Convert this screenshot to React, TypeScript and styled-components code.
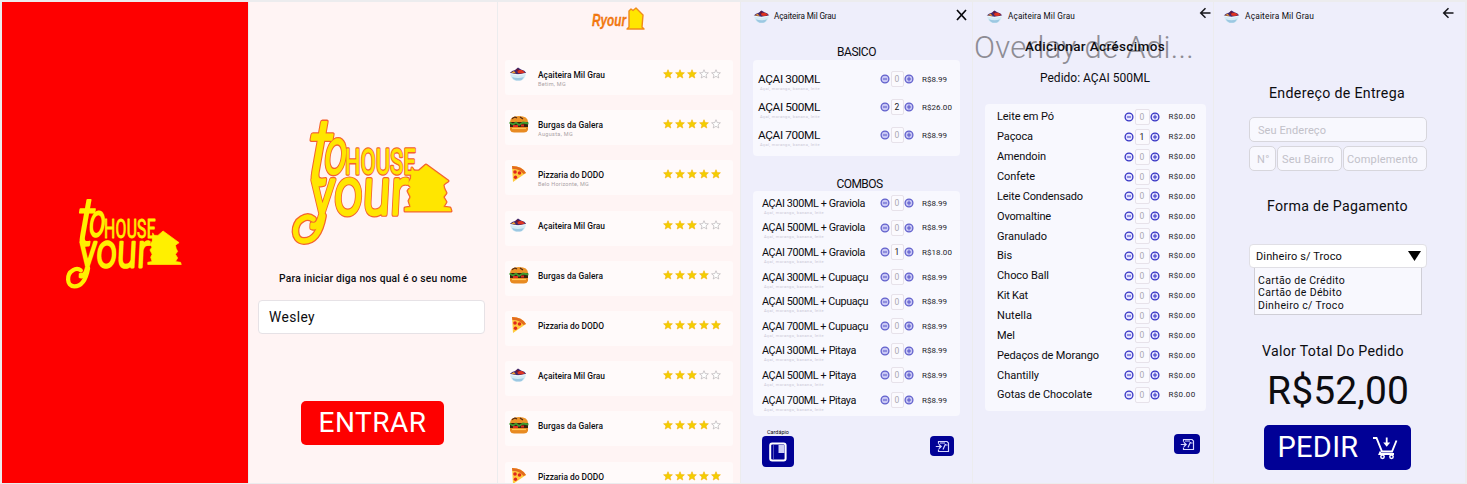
import React, { useLayoutEffect, useRef, useState } from "react";
import styled, { createGlobalStyle } from "styled-components";

const GlobalStyle = createGlobalStyle`
  * { box-sizing: border-box; }
  body { margin: 0; background: #ececee; font-family: Roboto, "Liberation Sans", sans-serif; color: #0c0c10; }
`;

const Board = styled.main`
  display: grid;
  grid-template-columns: 246px 248px 242px 231px 240px 251px;
  column-gap: 1px;
  width: 1467px;
  height: 484px;
  padding: 2px 0 1px 2px;
  overflow: hidden;
`;

const Screen = styled.section<{ $bg: string }>`
  display: flex;
  flex-direction: column;
  min-width: 0;
  height: 481px;
  overflow: hidden;
  background: ${(p) => p.$bg};
`;

const FitSpan = styled.span<{ $size: number; $weight?: number; $color?: string }>`
  display: inline-block;
  white-space: pre;
  flex: none;
  align-self: flex-start;
  width: max-content;
  font-size: ${(p) => p.$size}px;
  font-weight: ${(p) => p.$weight ?? 400};
  color: ${(p) => p.$color ?? "inherit"};
`;

type FitProps = { text: string; size: number; width?: number; weight?: number; color?: string };

/* Tracks the label in or out so that it takes the given width. */
function Fit({ text, size, width, weight, color }: FitProps) {
  const ref = useRef<HTMLSpanElement>(null);
  const [spacing, setSpacing] = useState(0);
  useLayoutEffect(() => {
    const el = ref.current;
    if (el && width) {
      el.style.letterSpacing = "0px";
      const next = (width - el.getBoundingClientRect().width) / text.length;
      el.style.letterSpacing = `${next}px`;
      setSpacing(next);
    }
  }, [text, width]);
  return (
    <FitSpan ref={ref} $size={size} $weight={weight} $color={color} style={{ letterSpacing: `${spacing}px` }}>
      {text}
    </FitSpan>
  );
}

const Line = styled.div<{ $h: number; $mt?: number; $ml?: number; $center?: boolean }>`
  display: flex;
  flex: none;
  align-items: center;
  justify-content: ${(p) => (p.$center ? "center" : "flex-start")};
  height: ${(p) => p.$h}px;
  line-height: ${(p) => p.$h}px;
  margin-top: ${(p) => p.$mt ?? 0}px;
  margin-left: ${(p) => p.$ml ?? 0}px;
`;

/* ---------- brand ---------- */

const LogoSvg = styled.svg<{ $mt: number; $ml: number }>`
  display: block;
  flex: none;
  overflow: visible;
  margin: ${(p) => p.$mt}px 0 0 ${(p) => p.$ml}px;
`;

const housePath =
  "M118 47 L120 50 L125 50 L132 44 L154 60 L151 62 L149 64 L150 68 L152 72 L149 76 L152 81 L149 86 L156 87 L157 90 L111 90 L111 87 L117 86 L115 80 L117 76 L114 70 L117 66 L114 63 L117 58 Z";

function LogoShapes({ color, extra }: { color: string; extra: number }) {
  return (
    <g fill={color} stroke={color} strokeLinejoin="round" strokeLinecap="round">
      <g fontFamily="Roboto, 'Liberation Sans', sans-serif" fontWeight="300">
        <text transform="translate(9 63) skewX(-10) scale(1.25 1.55)" fontSize="60" strokeWidth={1.7 + extra / 1.4}>t</text>
        <text transform="translate(29 51.5) skewX(-7) scale(.64 1.03)" fontSize="60" strokeWidth={2.8 + extra * 1.15}>o</text>
        <text transform="translate(51 53) scale(.6 1)" fontSize="36" fontWeight="400" textLength="118" strokeWidth={0.8 + extra * 1.1}>HOUSE</text>
        <text transform="translate(16 93) skewX(-3) scale(.72 .95)" fontSize="68" textLength="134" strokeWidth={3.6 + extra}>your</text>
      </g>
      <path d="M29 95 C26 112 19 120 10 120 C-1 120 -1 103 8 98 Q14 94 19 98" fill="none" strokeWidth={5.4 + extra} />
      <path d={housePath} strokeWidth={0.6 + extra} />
    </g>
  );
}

function Logo({ width, mt, ml, outlined }: { width: number; mt: number; ml: number; outlined?: boolean }) {
  return (
    <LogoSvg $mt={mt} $ml={ml} width={width} height={(width * 123) / 158} viewBox="0 0 158 123">
      {outlined && <LogoShapes color="#f4622e" extra={2.4} />}
      <LogoShapes color={outlined ? "#ffe600" : "#fff000"} extra={outlined ? 0 : 0.4} />
    </LogoSvg>
  );
}

function MiniLogo() {
  return (
    <LogoSvg $mt={5} $ml={94} width="54" height="26" viewBox="0 0 54 26">
      <text x="0" y="19" fontFamily="'Liberation Sans', sans-serif" fontStyle="italic" fontWeight="700" fontSize="17" textLength="34" lengthAdjust="spacingAndGlyphs" fill="#f57d10" stroke="#e8640c" strokeWidth=".3">Ryour</text>
      <path d="M35 22 L37 20 L37 4 L39 2 L41 3.5 L44 1 L51 8 L50 20 L52 22 Z" fill="#ffe600" stroke="#f08a1c" strokeWidth="1.4" strokeLinejoin="round" />
    </LogoSvg>
  );
}

/* ---------- food icons ---------- */

const Glyph = styled.svg`
  display: block;
  flex: none;
`;

function Bowl({ size = 18 }: { size?: number }) {
  return (
    <Glyph width={size} height={size} viewBox="0 0 18 18">
      <path d="M1 8 Q2 14.5 6 15.5 H12 Q16 14.5 17 8 Z" fill="#d4ebf5" />
      <path d="M3 12 Q9 14 15 12 Q13 15.5 11 15.5 H7 Q4 15 3 12" fill="#9cc8e2" />
      <path d="M.8 8 Q3 5.5 6 5 L9 2.6 L12 4.6 Q16 5.5 17.2 8 Q9 10.5 .8 8" fill="#42286c" />
      <path d="M8 5 L13 5 L16 7.5 Q12 9 9 8 Z" fill="#de3320" />
      <path d="M2 7.8 L5 6 L7 8.5 Z" fill="#f2a030" />
      <circle cx="8.5" cy="5" r="1.2" fill="#701632" />
      <path d="M1 8.5 Q9 11.5 17 8.5" fill="none" stroke="#f2f9fc" />
    </Glyph>
  );
}

function Burger() {
  return (
    <Glyph width="20" height="18" viewBox="0 0 20 18">
      <path d="M1 7 Q1 1 10 1 Q19 1 19 7 Z" fill="#ec9428" />
      <path d="M3 4 Q5 1 8 3 M11 2 L14 4" stroke="#542a10" strokeWidth="1.2" fill="none" />
      <path d="M1 7 H19 V12 H1Z" fill="#3c210f" />
      <path d="M.5 7.5 L4 9.5 L7 7.5 L10 10 L14 7.5 L19.5 8.5" stroke="#3d9a2e" strokeWidth="1.8" fill="none" />
      <path d="M4 11 H9 M12 10.5 H15" stroke="#df2d20" strokeWidth="2" />
      <path d="M1 12 H19 V15 Q18 17.5 15 17.5 H5 Q2 17.5 1 15Z" fill="#e88a22" />
      <path d="M3 13.5 H17" stroke="#ffc657" strokeWidth="1.2" />
    </Glyph>
  );
}

function Pizza() {
  return (
    <Glyph width="18" height="18" viewBox="0 0 18 18">
      <path d="M3 1 Q13 1 17 8 L4 17 Z" fill="#ffc93d" />
      <path d="M3 1 Q13 1 17 8 L14.5 9 Q10 3.5 3.4 4Z" fill="#e36b1d" />
      <circle cx="6" cy="7" r="1.8" fill="#e0281c" />
      <circle cx="10.5" cy="8" r="1.8" fill="#e0281c" />
      <circle cx="6.5" cy="12.3" r="1.7" fill="#e0281c" />
    </Glyph>
  );
}

/* ---------- restaurants ---------- */

const CardList = styled.div`
  display: flex;
  flex-direction: column;
  gap: 15.2px;
  margin: 27px 7px 0;
`;

const StoreCard = styled.article`
  display: grid;
  grid-template-columns: 33px 125px 1fr;
  flex: none;
  height: 35px;
  padding-top: 5px;
  border-radius: 3px;
  background: #fffafa;
`;

const IconCell = styled.div`
  padding-left: 4px;
`;

const StoreText = styled.div`
  display: flex;
  flex-direction: column;
  padding-top: 5px;
  line-height: 11px;
`;

const StoreTown = styled.div`
  height: 5px;
  line-height: 5px;
  margin-top: -3px;
`;

const Stars = styled.div`
  display: flex;
  gap: 2px;
  padding-top: 4px;
`;

function Star({ on }: { on: boolean }) {
  return (
    <Glyph width="10" height="10" viewBox="0 0 10 10">
      <path
        d="M5 .7 L6.2 3.6 L9.4 3.8 L7 5.9 L7.8 9 L5 7.3 L2.2 9 L3 5.9 L.6 3.8 L3.8 3.6 Z"
        fill={on ? "#f2cf00" : "#fff"}
        stroke={on ? "#f7b818" : "#b9b4b8"}
        strokeWidth=".7"
      />
    </Glyph>
  );
}

const kinds = [
  { icon: <Bowl />, name: "Açaiteira Mil Grau", width: 67, town: "Betim, MG", tw: 28, stars: 3 },
  { icon: <Burger />, name: "Burgas da Galera", width: 65, town: "Augusta, MG", tw: 35, stars: 4 },
  { icon: <Pizza />, name: "Pizzaria do DODO", width: 66, town: "Belo Horizonte, MG", tw: 51, stars: 5 },
];

function Stores() {
  return (
    <CardList>
      {Array.from({ length: 9 }, (_, i) => {
        const k = kinds[i % 3];
        return (
          <StoreCard key={i}>
            <IconCell>{k.icon}</IconCell>
            <StoreText>
              <Fit text={k.name} size={8.4} width={k.width} weight={500} />
              {i < 3 && <StoreTown><Fit text={k.town} size={5.5} width={k.tw} color="#aaa2a5" /></StoreTown>}
            </StoreText>
            <Stars>{[0, 1, 2, 3, 4].map((s) => <Star key={s} on={s < k.stars} />)}</Stars>
          </StoreCard>
        );
      })}
    </CardList>
  );
}

/* ---------- login ---------- */

const NameInput = styled.div`
  display: flex;
  align-items: center;
  flex: none;
  width: 227px;
  height: 34px;
  line-height: 33px;
  margin: 14px 0 0 9px;
  padding-left: 10px;
  border: 1px solid #e6e2e6;
  border-radius: 4px;
  background: #fff;
`;

const BigButton = styled.button<{ $bg: string; $w: number; $h: number }>`
  display: flex;
  align-items: center;
  justify-content: center;
  gap: 13px;
  flex: none;
  width: ${(p) => p.$w}px;
  height: ${(p) => p.$h}px;
  line-height: ${(p) => p.$h}px;
  padding: 0;
  border: 0;
  border-radius: 5px;
  background: ${(p) => p.$bg};
  color: #fff;
  font-family: inherit;
`;

const ButtonSlot = styled.div<{ $mt: number; $ml: number }>`
  margin: ${(p) => p.$mt}px 0 0 ${(p) => p.$ml}px;
`;

/* ---------- orders ---------- */

const Header = styled.header<{ $pl: number; $pr: number }>`
  display: flex;
  align-items: center;
  flex: none;
  height: 28px;
  padding: 0 ${(p) => p.$pr}px 0 ${(p) => p.$pl}px;
`;

const Brand = styled.div<{ $gap: number }>`
  display: flex;
  align-items: center;
  flex: 1;
  line-height: 19px;
  gap: ${(p) => p.$gap}px;
`;

const HeaderAction = styled.div<{ $h: number }>`
  height: ${(p) => p.$h}px;
`;

const Panel = styled.div<{ $h: number; $mt?: number; $w: number; $ml: number; $pt: number }>`
  display: flex;
  flex-direction: column;
  flex: none;
  width: ${(p) => p.$w}px;
  height: ${(p) => p.$h}px;
  margin: ${(p) => p.$mt ?? 0}px 0 0 ${(p) => p.$ml}px;
  padding-top: ${(p) => p.$pt}px;
  border-radius: 4px;
  background: #f8f8fe;
`;

const ItemRow = styled.div<{ $h: number; $qty: number }>`
  display: grid;
  grid-template-columns: ${(p) => p.$qty}px auto 1fr;
  align-items: center;
  flex: none;
  height: ${(p) => p.$h}px;
  line-height: 13px;
`;

const ItemName = styled.div<{ $pl: number }>`
  display: flex;
  flex-direction: column;
  padding-left: ${(p) => p.$pl}px;
`;

const ItemNote = styled.div`
  height: 4px;
  margin: -3px 0 -1px 2px;
  line-height: 4px;
`;

const Stepper = styled.div`
  display: flex;
  align-items: center;
`;

const Quantity = styled.div<{ $w: number }>`
  display: flex;
  justify-content: center;
  width: ${(p) => p.$w}px;
  height: 16px;
  margin: 0 0.5px;
  border: 1px solid #e7e2ea;
  border-radius: 2px;
  background: #fbfafe;
  line-height: 15px;
`;

const Price = styled.div<{ $ml: number }>`
  display: flex;
  margin-left: ${(p) => p.$ml}px;
`;

function Round({ plus, strong }: { plus?: boolean; strong?: boolean }) {
  return (
    <Glyph width="10" height="10" viewBox="0 0 10 10">
      <circle cx="5" cy="5" r="3.9" fill={strong ? "#e5e4ff" : "#c9c8f4"} stroke={strong ? "#3634c4" : "#6160cc"} strokeWidth="1.3" />
      <path d={plus ? "M3 5 H7 M5 2.6 V7.4" : "M3 5 H7"} stroke={strong ? "#3634c4" : "#5553c8"} strokeWidth="1" />
    </Glyph>
  );
}

type ItemProps = {
  name: string; size: number; width: number; h: number; pl: number; qty: number;
  n?: string; price: string; pw: number; strong?: boolean; note?: boolean;
};

function Item({ name, size, width, h, pl, qty, n = "0", price, pw, strong, note }: ItemProps) {
  return (
    <ItemRow $h={h} $qty={qty}>
      <ItemName $pl={pl}>
        <Fit text={name} size={size} width={width} />
        {note && <ItemNote><Fit text="Açaí, morango, banana, leite" size={4} width={60} color="#c9c7d4" /></ItemNote>}
      </ItemName>
      <Stepper>
        <Round strong={strong} />
        <Quantity $w={strong ? 15 : 13}>
          <Fit text={n} size={8.5} color={n === "0" ? "#aaa7b2" : "#18181c"} />
        </Quantity>
        <Round plus strong={strong} />
      </Stepper>
      <Price $ml={strong ? 8.5 : 8}><Fit text={price} size={8} width={pw} color="#24242c" /></Price>
    </ItemRow>
  );
}

const Footer = styled.footer<{ $mt: number; $pl: number; $pr: number }>`
  display: flex;
  justify-content: space-between;
  align-items: flex-start;
  flex: none;
  margin-top: ${(p) => p.$mt}px;
  padding: 0 ${(p) => p.$pr}px 0 ${(p) => p.$pl}px;
`;

const MenuGroup = styled.div`
  display: flex;
  flex-direction: column;
  line-height: 7px;
`;

const MenuLabel = styled.div`
  display: flex;
  padding-left: 5px;
`;

const Tile = styled.div<{ $w: number; $h: number; $mt?: number }>`
  display: flex;
  align-items: center;
  justify-content: center;
  width: ${(p) => p.$w}px;
  height: ${(p) => p.$h}px;
  margin-top: ${(p) => p.$mt ?? 0}px;
  border-radius: 4px;
  background: #010196;
`;

function BookIcon() {
  return (
    <Glyph width="18" height="20" viewBox="0 0 18 20">
      <rect x="1.2" y="1.4" width="15.4" height="17" rx="2" fill="none" stroke="#fff" strokeWidth="2" />
      <path d="M9.5 3 H15.5 V11 H9.5Z" fill="#cfcff6" />
      <path d="M4.5 3 V17" stroke="#5252bd" strokeWidth="1" />
    </Glyph>
  );
}

function WalletIcon() {
  return (
    <Glyph width="15" height="13" viewBox="0 0 15 13">
      <path d="M3.5 3.8 V1.5 H12 L13.5 3 V11.5 H3.5 V9.5 M.8 6.5 H6 M3.8 4.3 L6.2 6.5 L3.8 8.8 M5 3 H10 M10.5 4 L8 9.5 M10.3 5 H12.5" fill="none" stroke="#d7d7ff" strokeWidth="1.2" />
    </Glyph>
  );
}

function BackIcon() {
  return (
    <Glyph width="12" height="12" viewBox="0 0 12 12">
      <path d="M11.5 6 H2 M6.5 1.2 L1.7 6 L6.5 10.8" fill="none" stroke="#15151a" strokeWidth="1.5" />
    </Glyph>
  );
}

function CloseIcon() {
  return (
    <Glyph width="11" height="12" viewBox="0 0 11 12">
      <path d="M1 1 L10 11 M10 1 L1 11" stroke="#08080c" strokeWidth="1.7" />
    </Glyph>
  );
}

const combos = ["Graviola", "Cupuaçu", "Pitaya"].flatMap((f) => ["300ML", "500ML", "700ML"].map((s) => ({ s, f })));
const comboWidth: Record<string, number> = { Graviola: 103, Cupuaçu: 106, Pitaya: 94 };

/* ---------- extras ---------- */

const TitleStack = styled.div`
  display: grid;
  flex: none;
  height: 33px;
  line-height: 32px;
  & > * { grid-area: 1 / 1; }
`;

const GhostTitle = styled.div`
  padding: 2px 0 0 1px;
`;

const FrontTitle = styled.div`
  padding-left: 52px;
`;

const extras: [string, number][] = [
  ["Leite em Pó", 57], ["Paçoca", 36], ["Amendoin", 49], ["Confete", 38], ["Leite Condensado", 86],
  ["Ovomaltine", 54], ["Granulado", 50], ["Bis", 15], ["Choco Ball", 52], ["Kit Kat", 31],
  ["Nutella", 35], ["Mel", 18], ["Pedaços de Morango", 102], ["Chantilly", 42], ["Gotas de Chocolate", 95],
];

/* ---------- checkout ---------- */

const FieldRow = styled.div<{ $mt: number }>`
  display: flex;
  flex: none;
  gap: 1px;
  width: 178px;
  margin: ${(p) => p.$mt}px 0 0 35px;
`;

const Field = styled.div<{ $w: number; $pl: number }>`
  display: flex;
  align-items: center;
  width: ${(p) => p.$w}px;
  height: 25px;
  line-height: 25px;
  padding-left: ${(p) => p.$pl}px;
  border: 1px solid #d7d6dc;
  border-radius: 5px;
  background: #f8f8fe;
`;

const Select = styled.div`
  display: flex;
  align-items: center;
  justify-content: space-between;
  flex: none;
  width: 178px;
  height: 24px;
  line-height: 24px;
  margin: 29px 0 0 35px;
  padding: 0 5px 0 6px;
  border: 1px solid #e0dfe5;
  border-radius: 4px;
  background: #fff;
`;

const Options = styled.div`
  display: flex;
  flex-direction: column;
  flex: none;
  width: 168px;
  height: 47px;
  margin-left: 40px;
  padding: 6.5px 0 0 3px;
  border: 1px solid #cfced6;
  border-top: 0;
  background: #f8f8fe;
  line-height: 12.9px;
`;

function CartIcon() {
  return (
    <Glyph width="26" height="24" viewBox="0 0 26 24">
      <path d="M1 2 H4.5 L10 15.5 H20 L24.5 4.5 M8.5 15.5 L7.5 18 H22" fill="none" stroke="#fff" strokeWidth="1.9" />
      <path d="M14.7 1.5 V8" stroke="#fff" strokeWidth="1.8" />
      <path d="M11.2 6.5 H18.2 L14.7 10.8Z" fill="#fff" />
      <circle cx="10.5" cy="20.8" r="1.7" fill="none" stroke="#fff" strokeWidth="1.5" />
      <circle cx="19.5" cy="20.8" r="1.7" fill="none" stroke="#fff" strokeWidth="1.5" />
    </Glyph>
  );
}

const lilac = "#eeeefb";
const blush = "#fff4f4";

export default function App() {
  return (
    <>
      <GlobalStyle />
      <Board>
        <Screen $bg="#fe0000">
          <Logo width={115} mt={197} ml={65} />
        </Screen>

        <Screen $bg={blush}>
          <Logo width={158} mt={119} ml={45} outlined />
          <Line $h={14} $mt={28} $ml={30}>
            <Fit text="Para iniciar diga nos qual é o seu nome" size={10.3} width={188} weight={500} />
          </Line>
          <NameInput><Fit text="Wesley" size={13.8} width={46} /></NameInput>
          <ButtonSlot $mt={67} $ml={52}>
            <BigButton $bg="#fe0000" $w={143} $h={44}><Fit text="ENTRAR" size={28} width={108} /></BigButton>
          </ButtonSlot>
        </Screen>

        <Screen $bg={blush}>
          <MiniLogo />
          <Stores />
        </Screen>

        <Screen $bg={lilac}>
          <Header $pl={12} $pr={5}>
            <Brand $gap={4}><Bowl size={17} /><Fit text="Açaiteira Mil Grau" size={8.2} width={62} /></Brand>
            <HeaderAction $h={14}><CloseIcon /></HeaderAction>
          </Header>
          <Line $h={14} $mt={15} $center><Fit text="BASICO" size={12} width={39} /></Line>
          <Panel $w={207} $h={96} $mt={1} $ml={12} $pt={5}>
            <Item name="AÇAI 300ML" size={11.8} width={62} h={28} pl={5} qty={127} price="R$8.99" pw={25} note />
            <Item name="AÇAI 500ML" size={11.8} width={62} h={28} pl={5} qty={127} n="2" price="R$26.00" pw={30} note />
            <Item name="AÇAI 700ML" size={11.8} width={62} h={28} pl={5} qty={127} price="R$8.99" pw={25} note />
          </Panel>
          <Line $h={14} $mt={21} $ml={6} $center><Fit text="COMBOS" size={12} width={46} /></Line>
          <Panel $w={207} $h={225} $ml={12} $pt={0}>
            {combos.map(({ s, f }, i) => (
              <Item
                key={s + f} name={`AÇAI ${s} + ${f}`} size={10.8} width={comboWidth[f]} h={24.6} pl={9} qty={127}
                n={i === 2 ? "1" : "0"} price={i === 2 ? "R$18.00" : "R$8.99"} pw={i === 2 ? 30 : 25} note
              />
            ))}
          </Panel>
          <Footer $mt={13} $pl={21} $pr={18}>
            <MenuGroup>
              <MenuLabel><Fit text="Cardápio" size={5.5} width={22} /></MenuLabel>
              <Tile $w={32} $h={31}><BookIcon /></Tile>
            </MenuGroup>
            <Tile $w={24} $h={20} $mt={7}><WalletIcon /></Tile>
          </Footer>
        </Screen>

        <Screen $bg={lilac}>
          <Header $pl={13} $pr={2}>
            <Brand $gap={5}><Bowl size={17} /><Fit text="Açaiteira Mil Grau" size={8.2} width={67} /></Brand>
            <HeaderAction $h={19}><BackIcon /></HeaderAction>
          </Header>
          <TitleStack>
            <GhostTitle><Fit text="Overlay de Adi..." size={31} width={220} weight={300} color="#8d8c94" /></GhostTitle>
            <FrontTitle><Fit text="Adicionar Acréscimos" size={13.5} width={140} weight={500} /></FrontTitle>
          </TitleStack>
          <Line $h={14} $mt={8} $ml={67}><Fit text="Pedido: AÇAI 500ML" size={12} width={110} /></Line>
          <Panel $w={221} $h={307} $mt={19} $ml={12} $pt={3}>
            {extras.map(([name, w], i) => (
              <Item
                key={name} name={name} size={11} width={w} h={19.86} pl={12} qty={139} strong
                n={i === 1 ? "1" : "0"} price={i === 1 ? "R$2.00" : "R$0.00"} pw={27}
              />
            ))}
          </Panel>
          <Footer $mt={23} $pl={201} $pr={13}>
            <Tile $w={26} $h={20}><WalletIcon /></Tile>
          </Footer>
        </Screen>

        <Screen $bg={lilac}>
          <Header $pl={9} $pr={11}>
            <Brand $gap={5}><Bowl size={17} /><Fit text="Açaiteira Mil Grau" size={8.4} width={69} /></Brand>
            <HeaderAction $h={19}><BackIcon /></HeaderAction>
          </Header>
          <Line $h={18} $mt={54} $ml={55}><Fit text="Endereço de Entrega" size={14.2} width={136} /></Line>
          <FieldRow $mt={15}>
            <Field $w={178} $pl={8}><Fit text="Seu Endereço" size={11} width={68} color="#c2c1c9" /></Field>
          </FieldRow>
          <FieldRow $mt={4}>
            <Field $w={27} $pl={7}><Fit text="N°" size={11} width={13} color="#c2c1c9" /></Field>
            <Field $w={65} $pl={4}><Fit text="Seu Bairro" size={11} width={52} color="#c2c1c9" /></Field>
            <Field $w={84} $pl={3}><Fit text="Complemento" size={11} width={71} color="#c2c1c9" /></Field>
          </FieldRow>
          <Line $h={18} $mt={26} $ml={53}><Fit text="Forma de Pagamento" size={14.2} width={141} /></Line>
          <Select>
            <Fit text="Dinheiro s/ Troco" size={11} width={86} />
            <Glyph width="13" height="10" viewBox="0 0 13 10"><path d="M0 0 H13 L6.5 10Z" fill="#000" /></Glyph>
          </Select>
          <Options>
            <Fit text="Cartão de Crédito" size={10.5} width={87} />
            <Fit text="Cartão de Débito" size={10.5} width={84} />
            <Fit text="Dinheiro c/ Troco" size={10.5} width={86} />
          </Options>
          <Line $h={18} $mt={27} $ml={48}><Fit text="Valor Total Do Pedido" size={14.2} width={142} /></Line>
          <Line $h={40} $mt={11} $ml={53}><Fit text="R$52,00" size={39} width={142} /></Line>
          <ButtonSlot $mt={14} $ml={50}>
            <BigButton $bg="#010196" $w={147} $h={45}><Fit text="PEDIR" size={29} width={81} /><CartIcon /></BigButton>
          </ButtonSlot>
        </Screen>
      </Board>
    </>
  );
}
